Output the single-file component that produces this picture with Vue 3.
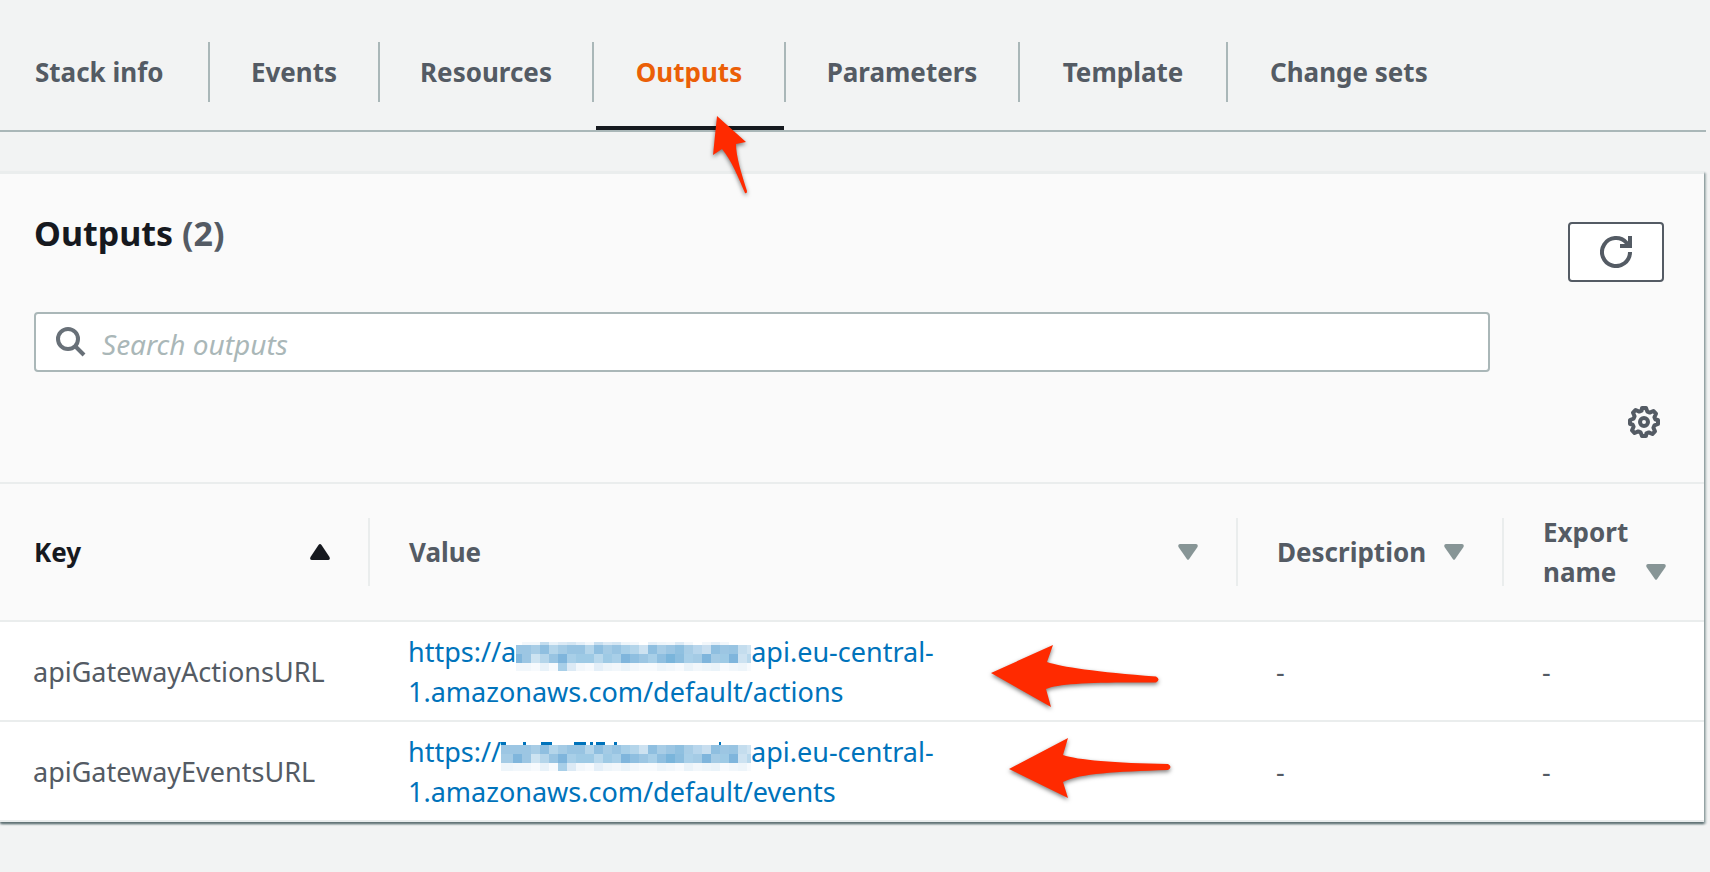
<script setup>
import { ref } from 'vue'

const tabs = ['Stack info', 'Events', 'Resources', 'Outputs', 'Parameters', 'Template', 'Change sets']
const active = ref('Outputs')
const query = ref('')

const columns = [
  { id: 'key', label: 'Key', sorted: true },
  { id: 'value', label: 'Value' },
  { id: 'description', label: 'Description' },
  { id: 'export', label: 'Export name' },
]

const rows = [
  { key: 'apiGatewayActionsURL', before: 'https://a', mask: 'short', path: 'actions' },
  { key: 'apiGatewayEventsURL', before: 'https://', mask: 'long', path: 'events' },
]

// Pixelated redaction of the API id, one colour per 9px cell
const bands = [
  { y: 0, h: 3, c: 'fff fff f2f7fb f2f7fb c4ddee e8f2f9 dceaf5 d4e6f3 e4eff8 f2f7fb c8dff0 dceaf5 d4e6f3 eef5fa f2f7fb fff e4eff8 eef5fa f2f7fb dceaf5 f2f7fb fff f2f7fb e4eff8 f2f7fb fff fff fff'.split(' ') },
  { y: 3, h: 9, c: '9cc6e3 9cc6e3 9cc6e3 a8cde6 8fbfe0 b4d5ea a4cbe5 98c4e2 98c4e2 b4d5ea 8fbfe0 a4cbe5 98c4e2 a8cfe8 b4d5ea cde2f1 8fbfe0 a8cde6 9cc6e3 8fc0e0 a8cde6 b8d6ec c8deef 8fbfe0 9cc6e3 98c4e2 c4ddee d0e4f2'.split(' ') },
  { y: 12, h: 9, c: 'a4cbe5 80b6dc 9cc6e3 cde3f1 b4d5ea 98c4e2 7fb5dc a8cfe8 9ecae5 9ecae5 b8d8ec 9ecae5 a8cfe8 7fb5dc 8fbfe0 9cc6e3 a8cfe8 8fbfe0 7ab5db 8cbedf a8cfe8 a4cbe5 7fb5dc a4cbe5 9ecae5 7fb5dc cde2f1 b8d8ec'.split(' ') },
  { y: 21, h: 8, c: 'eef5fa f2f7fb f2f7fb f7fafd e8f2f9 f7fafd a8cfe8 dceaf5 f2f7fb f7fafd e4eff8 eef5fa f2f7fb eaf3f9 f2f7fb f7fafd f7fafd eef5fa f2f7fb f7fafd eaf3f9 f2f7fb eef5fa eaf3f9 f7fafd f2f7fb eef5fa f7fafd'.split(' ') },
]
const letterTops = [[0, 5], [22, 3], [40, 11], [73, 12], [89, 3], [95, 9], [113, 3], [218, 2]]
</script>

<template>
  <div class="page">
    <nav class="tabs" aria-label="Stack sections">
      <button
        v-for="tab in tabs"
        :key="tab"
        type="button"
        class="tab"
        :class="{ active: tab === active }"
        @click="active = tab"
      ><span>{{ tab }}</span></button>
    </nav>

    <section class="panel">
      <header class="head">
        <div class="title-row">
          <h2>Outputs <span>(2)</span></h2>
          <button type="button" class="refresh" aria-label="Refresh">
            <svg width="32" height="32" viewBox="0 0 32 32" fill="none" stroke="currentColor" stroke-width="4">
              <path d="M30 16a14 14 0 1 1-3.5-9.2L29 10" />
              <path d="M30 0v10H20" />
            </svg>
          </button>
        </div>
        <label class="search">
          <svg width="30" height="30" viewBox="0 0 30 30" fill="none" stroke="currentColor" stroke-width="4">
            <circle cx="12" cy="12" r="10" />
            <path d="M19 19l9 9" />
          </svg>
          <input v-model="query" type="text" placeholder="Search outputs" aria-label="Search outputs" />
        </label>
        <button type="button" class="prefs" aria-label="Preferences">
          <svg width="32" height="32" viewBox="0 0 32 32" fill="none" stroke="currentColor" stroke-width="4" stroke-linejoin="round">
            <path d="M14 2h4l1.4 3.6 2.4 1 3.6-1.6 2.6 2.6-1.6 3.6 1 2.4L30 14v4l-3.6 1.4-1 2.4 1.6 3.6-2.6 2.6-3.6-1.6-2.4 1L18 30h-4l-1.4-3.6-2.4-1L6.6 27 4 24.4l1.6-3.6-1-2.4L2 18v-4l3.6-1.4 1-2.4L5 6.6 7.6 4l3.6 1.6 2.4-1z" />
            <circle cx="16" cy="16" r="4" />
          </svg>
        </button>
      </header>

      <table>
        <colgroup>
          <col class="c-key" /><col class="c-value" /><col class="c-desc" /><col />
        </colgroup>
        <thead>
          <tr>
            <th v-for="col in columns" :key="col.id" scope="col" :class="{ sorted: col.sorted }">
              <div class="th">
                <span>{{ col.label }}</span>
                <svg v-if="col.sorted" width="20" height="16" viewBox="0 0 20 16" fill="currentColor">
                  <path d="M8.500 1Q10-.8 11.500 1L19.500 13Q20.500 16 18 16H2Q-.5 16 .5 13z" />
                </svg>
                <svg v-else class="down" width="20" height="16" viewBox="0 0 20 16" fill="currentColor">
                  <path d="M2 0h16Q20.500.5 19.500 3L11 15.200q-1 1.200-2 0L.5 3Q-.5.5 2 0z" />
                </svg>
              </div>
            </th>
          </tr>
        </thead>
        <tbody>
          <tr v-for="row in rows" :key="row.key">
            <td>{{ row.key }}</td>
            <td>
              <a href="#">{{ row.before }}<svg
                class="mask" height="29"
                :width="row.mask === 'short' ? 235 : 250"
                :viewBox="row.mask === 'short' ? '15 0 235 29' : '0 0 250 29'"
                shape-rendering="crispEdges" aria-hidden="true"
              >
                <template v-for="band in bands" :key="band.y">
                  <template v-if="band.y || row.mask === 'short'">
                    <rect v-for="(c, i) in band.c" :key="i" :x="i ? i * 9 + 3 : 0" :y="band.y" :width="i ? 9 : 12" :height="band.h" :fill="'#' + c" />
                  </template>
                </template>
                <template v-if="row.mask === 'long'">
                  <rect v-for="[x, w] in letterTops" :key="x" :x="x" y="0" :width="w" height="3" fill="#0073bb" />
                </template>
              </svg>api.eu-central-<br />1.amazonaws.com/default/{{ row.path }}</a>
            </td>
            <td>-</td>
            <td>-</td>
          </tr>
        </tbody>
      </table>

      <svg class="arrow arrow-actions" width="176" height="70" viewBox="0 0 176 70" aria-hidden="true">
        <path d="M4 33 66 5 60 22C74 27 110 32 169 36.500q5 3 0 6C110 42 72 43 59 49L64 67z" />
      </svg>
      <svg class="arrow arrow-events" width="176" height="70" viewBox="0 0 176 70" aria-hidden="true">
        <path d="M4 34 L63 3 58 20C72 25 110 28 163 29q5 3 0 6C110 37 76 38 58 47L63 63z" />
      </svg>
    </section>

    <svg class="arrow arrow-tab" width="44" height="86" viewBox="0 0 44 86" aria-hidden="true">
      <path d="M7 3 36 29 26 31C26 44 32 62 37 78q0 3-2 2C28 64 22 48 12 36L3 42z" />
    </svg>
  </div>
</template>

<style>
body {
  background: #f2f3f3;
}
</style>

<style scoped>
.page {
  position: relative;
  padding: 0 4px 40px 0;
  color: #545b64;
  font: 27px/40px "Noto Sans", "Open Sans", sans-serif;
}
button {
  font: inherit;
  color: inherit;
  cursor: pointer;
}
svg {
  flex: none;
  display: block;
}
.tabs {
  display: grid;
  grid-template-columns: 210px 170px 214px 192px 234px 208px auto;
  padding-top: 42px;
  border-bottom: 2px solid #aab7b8;
}
.tab {
  position: relative;
  padding: 0 0 28px;
  border: 0;
  background: none;
  font-size: 26px;
  font-weight: 700;
  text-align: center;
}
.tab span {
  display: block;
  line-height: 60px;
  border-right: 2px solid #aab7b8;
}
.tab:first-child span {
  padding-left: 35px;
  text-align: left;
}
.tab:last-child span {
  padding-left: 42px;
  border: 0;
  text-align: left;
}
.tab.active {
  color: #eb5f07;
}
.tab.active::after {
  content: "";
  position: absolute;
  left: 2px;
  right: 2px;
  bottom: 0;
  height: 4px;
  background: #16191f;
}
.panel {
  position: relative;
  margin: 39px 2px 0 0;
  border-top: 3px solid #eaeded;
  background: #fff;
  box-shadow: 0 2px 2px #5f7073, 2px 2px 2px #aab7b8;
}
.head {
  display: flex;
  flex-direction: column;
  padding: 37px 40px 44px 34px;
  background: #fafafa;
}
.title-row {
  display: flex;
  justify-content: space-between;
}
h2 {
  margin: 0;
  color: #16191f;
  font-size: 34px;
  font-weight: 700;
  line-height: 44px;
}
h2 span {
  color: #545b64;
}
.refresh {
  display: flex;
  align-items: center;
  justify-content: center;
  width: 96px;
  height: 60px;
  margin-top: 11px;
  border: 2px solid #545b64;
  border-radius: 4px;
  background: #fff;
}
.search {
  display: flex;
  align-items: center;
  gap: 16px;
  box-sizing: border-box;
  height: 60px;
  margin: 30px 174px 0 0;
  padding: 0 20px;
  border: 2px solid #aab7b8;
  border-radius: 4px;
  background: #fff;
  color: #687078;
}
.search input {
  flex: 1;
  min-width: 0;
  padding: 3px 0 0;
  border: 0;
  outline: 0;
  background: none;
  color: #16191f;
  font: inherit;
  font-size: 28px;
}
.search input::placeholder {
  color: #aab7b8;
  font-style: italic;
  opacity: 1;
}
.prefs {
  align-self: flex-end;
  margin: 34px 4px 0 0;
  padding: 0;
  border: 0;
  background: none;
}
table {
  width: 100%;
  table-layout: fixed;
  border-collapse: separate;
  border-spacing: 0;
}
.c-key {
  width: 370px;
}
.c-value {
  width: 868px;
}
.c-desc {
  width: 266px;
}
th {
  padding: 34px 0;
  border-top: 2px solid #eaeded;
  border-bottom: 2px solid #eaeded;
  background: #fafafa;
  font-size: 26px;
  font-weight: 700;
  text-align: left;
}
.th {
  display: flex;
  align-items: center;
  justify-content: space-between;
  box-sizing: border-box;
  height: 68px;
  padding: 0 38px 0 39px;
  border-right: 2px solid #eaeded;
}
th:first-child .th {
  padding-left: 34px;
}
th:last-child .th {
  align-items: flex-end;
  height: auto;
  margin: -6px 0;
  border: 0;
}
th:last-child svg {
  margin-bottom: 12px;
}
.sorted {
  color: #16191f;
}
.down {
  color: #879596;
}
td {
  padding: 10px 38px 8px;
  border-bottom: 2px solid #eaeded;
}
td:first-child {
  padding-left: 33px;
  padding-right: 0;
}
td:nth-child(2) {
  white-space: nowrap;
}
a {
  color: #0073bb;
  text-decoration: none;
}
.mask {
  display: inline-block;
  vertical-align: -9px;
}
.arrow {
  position: absolute;
  fill: #ff2a00;
  filter: drop-shadow(0 2px 2px #00000080);
  pointer-events: none;
}
.arrow-tab {
  left: 710px;
  top: 113px;
}
.arrow-actions {
  left: 987px;
  top: 466px;
}
.arrow-events {
  left: 1005px;
  top: 561px;
}
</style>
